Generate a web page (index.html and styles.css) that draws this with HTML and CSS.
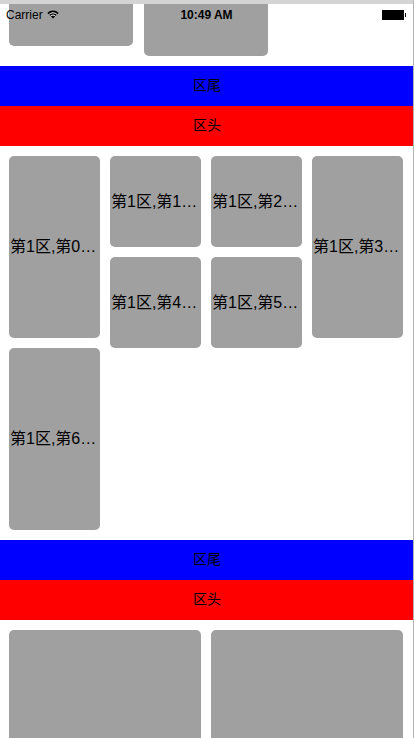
FILE: index.html
```html
<!DOCTYPE html>
<html lang="zh">
<head>
<meta charset="utf-8">
<title>Collection</title>
<link rel="stylesheet" href="styles.css">
</head>
<body>
<div class="screen">
  <div class="chrome-top"></div>
  <div class="chrome-right"></div>
  <div class="statusbar">
    <div class="sb-left">
      <span class="carrier">Carrier</span>
      <svg class="wifi" width="12" height="9" viewBox="0 0 12 9">
        <path d="M6 8.6 L0.3 2.9 A8 8 0 0 1 11.7 2.9 Z" fill="#000"/>
        <path d="M1.9 4.5 A5.8 5.8 0 0 1 10.1 4.5" stroke="#fff" stroke-width="1" fill="none"/>
        <path d="M3.5 6.1 A3.5 3.5 0 0 1 8.5 6.1" stroke="#fff" stroke-width="1" fill="none"/>
      </svg>
    </div>
    <div class="sb-time">10:49 AM</div>
    <div class="sb-right">
      <span class="battery"></span><span class="nub"></span>
    </div>
  </div>

  <section class="sec sec-a">
    <div class="col"><div class="cell h-a1"></div></div>
    <div class="col"><div class="cell h-a2"></div></div>
    <div class="col"></div>
  </section>
  <div class="bar footer">区尾</div>
  <div class="bar header">区头</div>

  <section class="sec sec-b">
    <div class="col">
      <div class="cell tall"><span class="label">第1区,第0个cell</span></div>
      <div class="cell tall"><span class="label">第1区,第6个cell</span></div>
    </div>
    <div class="col">
      <div class="cell small"><span class="label">第1区,第1个cell</span></div>
      <div class="cell small"><span class="label">第1区,第4个cell</span></div>
    </div>
    <div class="col">
      <div class="cell small"><span class="label">第1区,第2个cell</span></div>
      <div class="cell small"><span class="label">第1区,第5个cell</span></div>
    </div>
    <div class="col">
      <div class="cell tall"><span class="label">第1区,第3个cell</span></div>
    </div>
  </section>
  <div class="bar footer">区尾</div>
  <div class="bar header">区头</div>

  <section class="sec sec-c">
    <div class="col"><div class="cell big"></div></div>
    <div class="col"><div class="cell big"></div></div>
  </section>
</div>
</body>
</html>
```

FILE: styles.css
```css
html, body {
  margin: 0;
  padding: 0;
  background: #fff;
}
body {
  width: 414px;
  height: 738px;
  overflow: hidden;
  font-family: "Liberation Sans", "Noto Sans CJK SC", sans-serif;
  color: #000;
}
.screen {
  position: relative;
  width: 414px;
  height: 738px;
  overflow: hidden;
}
.chrome-top {
  position: absolute;
  left: 0;
  top: 0;
  width: 414px;
  height: 4px;
  background: #d4d4d4;
  z-index: 5;
}
.chrome-right {
  position: absolute;
  right: 0;
  top: 0;
  width: 1px;
  height: 738px;
  background: #b4b4b4;
  z-index: 5;
}
.statusbar {
  position: absolute;
  left: 0;
  top: 0;
  width: 414px;
  height: 22px;
  z-index: 4;
  display: flex;
  align-items: flex-start;
  padding-top: 9px;
  box-sizing: border-box;
  font-size: 12px;
  line-height: 12px;
}
.statusbar > * { flex: 1; }
.sb-left {
  display: flex;
  align-items: center;
  padding-left: 6px;
  gap: 4px;
}
.wifi { display: block; margin-top: -1px; }
.sb-time {
  text-align: center;
  font-weight: bold;
  padding-left: 1px;
}
.sb-right {
  display: flex;
  justify-content: flex-end;
  align-items: center;
  padding-right: 8px;
  padding-top: 1px;
}
.battery {
  display: block;
  width: 22px;
  height: 10px;
  background: #000;
}
.nub {
  display: block;
  width: 1px;
  height: 4px;
  background: #000;
  margin-left: 1px;
}

.sec {
  display: flex;
  padding: 10px 11px 10px 9px;
}
.col {
  flex: 1;
  min-width: 0;
  display: flex;
  flex-direction: column;
  gap: 10px;
}
.sec-a { margin-top: -60px; gap: 11px; }
.sec-b { gap: 10px; }
.sec-c { gap: 10px; padding-bottom: 0; }

.cell {
  background: #a0a0a0;
  border-radius: 5px;
  display: flex;
  align-items: center;
  overflow: hidden;
}
.h-a1 { height: 96px; }
.h-a2 { height: 106px; }
.small { height: 91px; }
.tall { height: 182px; }
.big { height: 200px; }

.label {
  display: block;
  width: 100%;
  font-size: 16px;
  line-height: 20px;
  white-space: nowrap;
  overflow: hidden;
  text-overflow: ellipsis;
  padding-left: 1px;
}

.bar {
  height: 40px;
  box-sizing: border-box;
  padding-bottom: 3px;
  display: flex;
  align-items: center;
  justify-content: center;
  font-size: 14px;
  line-height: 16px;
}
.footer { background: #0000ff; }
.header { background: #ff0000; }
```
